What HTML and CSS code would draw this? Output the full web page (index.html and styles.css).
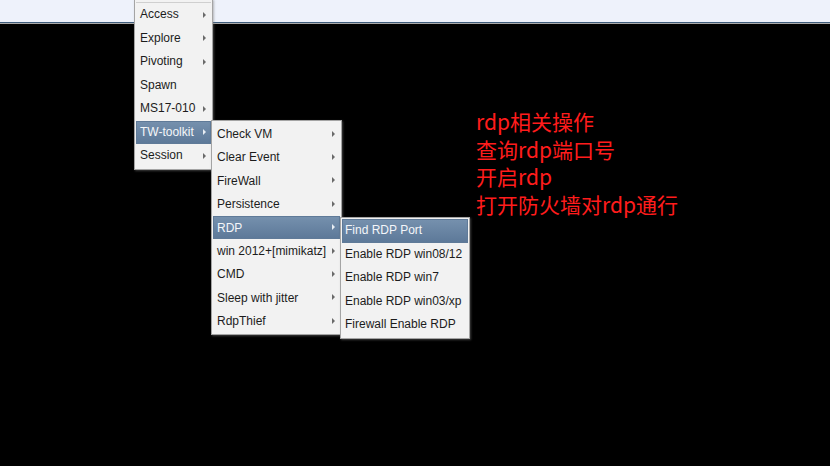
FILE: index.html
```html
<!DOCTYPE html>
<html>
<head>
<meta charset="utf-8">
<link rel="stylesheet" href="styles.css">
</head>
<body>
<div class="topbar"></div>
<div class="canvas">
  <div class="note">
    <div>rdp相关操作</div>
    <div>查询rdp端口号</div>
    <div>开启rdp</div>
    <div>打开防火墙对rdp通行</div>
  </div>
</div>

<div class="menu menu-main">
  <div class="sep"></div>
  <div class="item sub">Access</div>
  <div class="item sub">Explore</div>
  <div class="item sub">Pivoting</div>
  <div class="item">Spawn</div>
  <div class="item sub">MS17-010</div>
  <div class="item sub active">TW-toolkit</div>
  <div class="item sub">Session</div>
</div>

<div class="menu menu-tw">
  <div class="item sub">Check VM</div>
  <div class="item sub">Clear Event</div>
  <div class="item sub">FireWall</div>
  <div class="item sub">Persistence</div>
  <div class="item sub active">RDP</div>
  <div class="item sub">win 2012+[mimikatz]</div>
  <div class="item sub">CMD</div>
  <div class="item sub">Sleep with jitter</div>
  <div class="item sub">RdpThief</div>
</div>

<div class="menu menu-rdp">
  <div class="item active">Find RDP Port</div>
  <div class="item">Enable RDP win08/12</div>
  <div class="item">Enable RDP win7</div>
  <div class="item">Enable RDP win03/xp</div>
  <div class="item">Firewall Enable RDP</div>
</div>
</body>
</html>
```
FILE: styles.css
```css
html, body {
  margin: 0;
  padding: 0;
  background: #000;
  width: 830px;
  height: 466px;
  overflow: hidden;
  font-family: "Liberation Sans", Arial, sans-serif;
}

.topbar {
  height: 22px;
  background: #eef2fb;
  border-bottom: 1px solid #3f5d7c;
  box-shadow: 0 1px 0 #a9a9a9;
}

.canvas {
  padding: 85px 0 0 476px;
}

.note {
  color: #ff1c1c;
  font-family: "Noto Sans CJK SC", "Liberation Sans", sans-serif;
  font-size: 21px;
  line-height: 27.7px;
}

.menu {
  position: absolute;
  background: #f2f2f2;
  border: 1px solid #a4a4a4;
  padding: 1px;
  box-sizing: border-box;
  box-shadow: 1px 1px 2px rgba(120, 120, 120, 0.5);
  font-size: 12px;
  color: #1c1c1c;
}

.menu-main {
  left: 134px;
  top: -1px;
  width: 79px;
}

.menu-tw {
  left: 211px;
  top: 120px;
  width: 131px;
}

.menu-rdp {
  left: 340px;
  top: 217px;
  width: 130px;
}

.sep {
  height: 1px;
  background: #cfcfcf;
  margin: 1px 0 0 0;
}

.item {
  position: relative;
  height: 23.5px;
  line-height: 23.5px;
  padding-left: 4px;
  white-space: nowrap;
}

.menu-tw .item {
  height: 23.4px;
  line-height: 24px;
}

.menu-rdp .item {
  padding-left: 3px;
}

.item.sub::after {
  content: "";
  position: absolute;
  right: 5px;
  top: 50%;
  margin-top: -3px;
  border-left: 3px solid #6a6a6a;
  border-top: 3px solid transparent;
  border-bottom: 3px solid transparent;
}

.item.active {
  background: linear-gradient(#7691ae, #5c7898);
  color: #f4f6f9;
  box-shadow: inset 0 0 0 1px #5f7a98;
}

.item.active.sub::after {
  border-left-color: #e8edf3;
}
```
